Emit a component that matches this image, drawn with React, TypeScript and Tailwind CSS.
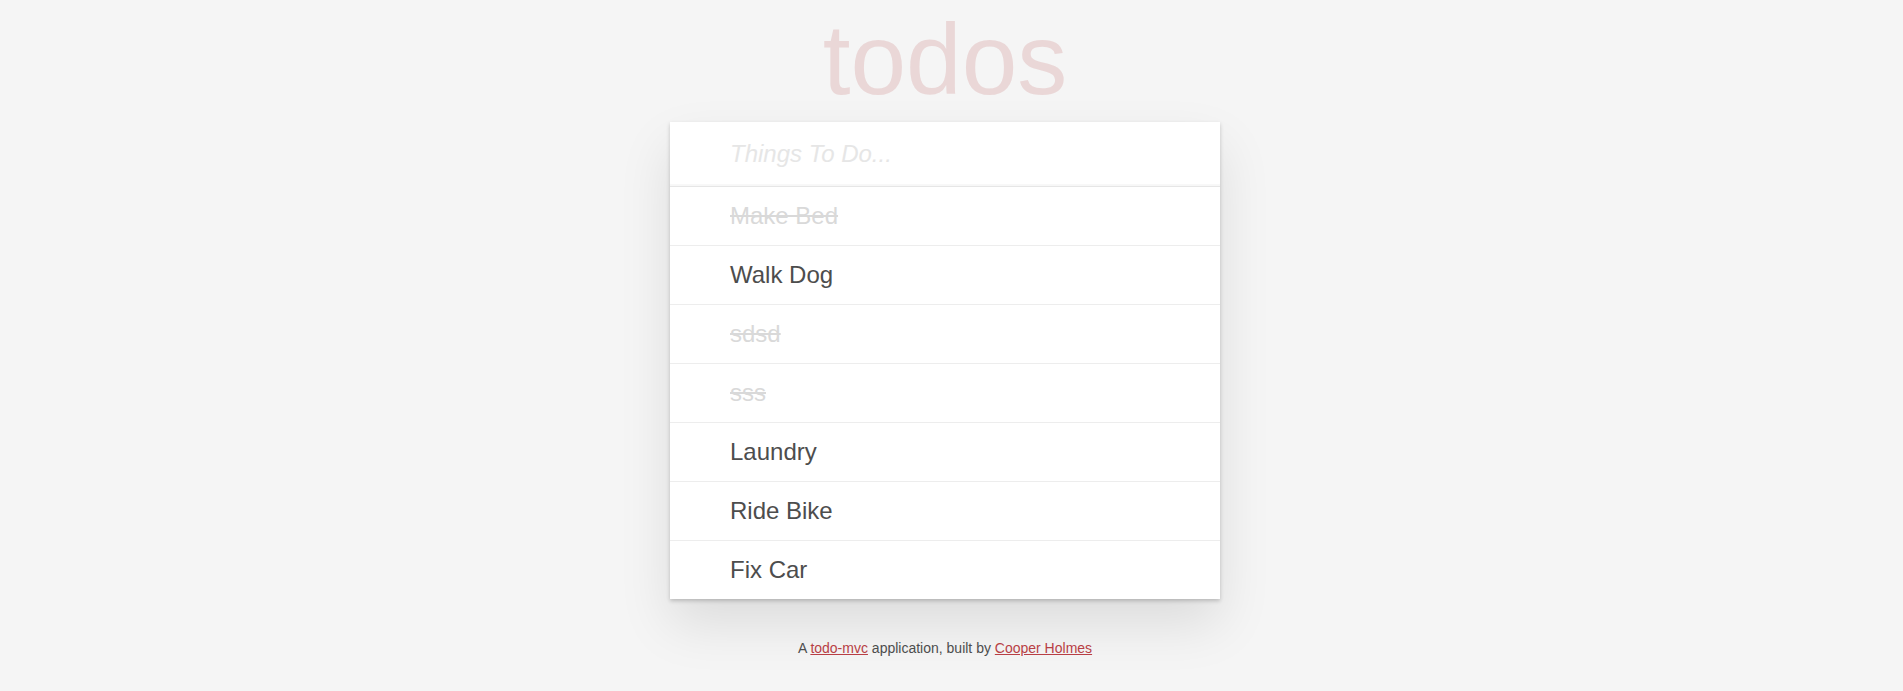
import { useState } from "react";

interface Todo {
  id: number;
  title: string;
  completed: boolean;
}

const initialTodos: Todo[] = [
  { id: 1, title: "Make Bed", completed: true },
  { id: 2, title: "Walk Dog", completed: false },
  { id: 3, title: "sdsd", completed: true },
  { id: 4, title: "sss", completed: true },
  { id: 5, title: "Laundry", completed: false },
  { id: 6, title: "Ride Bike", completed: false },
  { id: 7, title: "Fix Car", completed: false },
];

export default function App() {
  const [todos] = useState(initialTodos);
  const [text, setText] = useState("");

  return (
    <div className="min-h-screen bg-[#f5f5f5] pr-[13px] font-['Liberation_Sans',Arial,sans-serif] text-[#4d4d4d]">
      <div className="w-[550px] mx-auto">
        <h1 className="pt-[9px] text-center text-[100px] leading-[100px] font-thin text-[rgba(175,47,47,0.15)]">
          todos
        </h1>

        <section className="mt-[13px] bg-white shadow-[0_2px_4px_0_rgba(0,0,0,0.2),0_25px_50px_0_rgba(0,0,0,0.1)]">
          <input
            value={text}
            onChange={(e) => setText(e.target.value)}
            placeholder="Things To Do..."
            className="block w-full h-[64px] pr-4 pl-[60px] text-[24px] leading-[32px] bg-transparent border-0 outline-none shadow-[inset_0_-2px_1px_rgba(0,0,0,0.03)] placeholder:italic placeholder:font-light placeholder:text-[#e6e6e6]"
          />
          <ul className="border-t border-[#e6e6e6]">
            {todos.map((todo, i) => (
              <li
                key={todo.id}
                className={`py-[15px] pr-[15px] pl-[60px] text-[24px] leading-[28px] ${
                  i < todos.length - 1 ? "border-b border-[#ededed]" : ""
                } ${todo.completed ? "text-[#d9d9d9] line-through" : "text-[#4d4d4d]"}`}
              >
                {todo.title}
              </li>
            ))}
          </ul>
        </section>

        <footer className="mt-[41px] text-center text-[14px] leading-[16px] text-[#4d4d4d]">
          A{" "}
          <a href="#" className="text-[#b83f45] underline">
            todo-mvc
          </a>{" "}
          application, built by{" "}
          <a href="#" className="text-[#b83f45] underline">
            Cooper Holmes
          </a>
        </footer>
      </div>
    </div>
  );
}
